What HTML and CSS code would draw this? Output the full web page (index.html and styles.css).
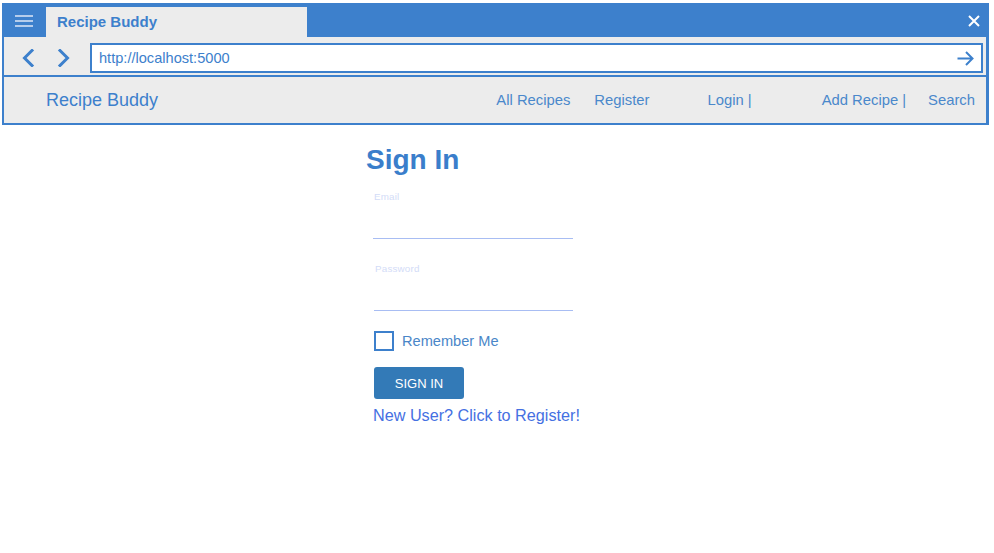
FILE: index.html
```html
<!DOCTYPE html>
<html lang="en">
<head>
<meta charset="utf-8">
<title>Recipe Buddy</title>
<link rel="stylesheet" href="styles.css">
</head>
<body>
<div class="browser">
  <div class="titlebar">
    <div class="menu-btn">
      <svg width="18" height="13" viewBox="0 0 18 13"><rect x="0" y="0" width="18" height="2"/><rect x="0" y="5" width="18" height="2"/><rect x="0" y="10" width="18" height="2"/></svg>
    </div>
    <div class="tab">Recipe Buddy</div>
    <div class="close-btn">
      <svg width="12" height="12" viewBox="0 0 12 12"><path d="M1 1 L11 11 M11 1 L1 11"/></svg>
    </div>
  </div>
  <div class="toolbar">
    <div class="nav-btn">
      <svg width="14" height="18" viewBox="0 0 14 18"><path d="M11 1.5 L3.5 9 L11 16.5"/></svg>
    </div>
    <div class="nav-btn">
      <svg width="14" height="18" viewBox="0 0 14 18"><path d="M3 1.5 L10.5 9 L3 16.5"/></svg>
    </div>
    <div class="urlbar">
      <span class="url">http://localhost:5000</span>
      <svg class="go" width="17" height="15" viewBox="0 0 17 15"><path d="M0.5 7.5 H15.5 M9 1 L15.5 7.5 L9 14"/></svg>
    </div>
  </div>
  <nav class="sitenav">
    <a class="brand">Recipe Buddy</a>
    <ul class="links">
      <li class="link">All Recipes</li>
      <li class="link link-register">Register</li>
      <li class="link link-login">Login |</li>
      <li class="link link-add">Add Recipe |</li>
      <li class="link link-search">Search</li>
    </ul>
  </nav>
</div>
<main class="content">
  <h1 class="title">Sign In</h1>
  <form class="signin">
    <div class="field">
      <label class="field-label">Email</label>
      <div class="field-input"></div>
    </div>
    <div class="field field-second">
      <label class="field-label">Password</label>
      <div class="field-input"></div>
    </div>
    <div class="remember">
      <span class="checkbox"></span>
      <span class="remember-text">Remember Me</span>
    </div>
    <button type="button" class="submit">SIGN IN</button>
    <a class="register-link">New User? Click to Register!</a>
  </form>
</main>
</body>
</html>
```
FILE: styles.css
```css
* { box-sizing: border-box; }
html, body { margin: 0; padding: 0; background: #ffffff; }
body { font-family: "Liberation Sans", Arial, sans-serif; }

.browser {
  margin: 3px 5px 0 2px;
  width: 987px;
}

.titlebar {
  height: 34px;
  background: #3d80cc;
  display: flex;
  align-items: flex-end;
}
.menu-btn {
  width: 44px;
  height: 34px;
  display: flex;
  align-items: flex-start;
  padding: 12px 0 0 13px;
}
.menu-btn svg { fill: #b5cdec; }
.tab {
  width: 261px;
  height: 30px;
  background: #ececec;
  color: #3d80cc;
  font-weight: bold;
  font-size: 15px;
  line-height: 30px;
  padding-left: 11px;
}
.close-btn {
  margin-left: auto;
  height: 34px;
  padding: 12px 9px 0 0;
}
.close-btn svg { display: block; }
.close-btn path { stroke: #ffffff; stroke-width: 2; fill: none; }

.toolbar {
  height: 40px;
  background: #ececec;
  border-left: 2px solid #3d80cc;
  border-right: 3px solid #3d80cc;
  border-bottom: 2px solid #3d80cc;
  display: flex;
  align-items: flex-start;
  padding: 6px 3px 0 14px;
}
.nav-btn {
  width: 36px;
  height: 30px;
  display: flex;
  align-items: center;
  padding-left: 3px;
}
.nav-btn svg { display: block; }
.nav-btn path { stroke: #3d80cc; stroke-width: 3; fill: none; stroke-linecap: square; }
.urlbar {
  flex: 1;
  height: 30px;
  background: #ffffff;
  border: 2px solid #3d80cc;
  display: flex;
  align-items: center;
  padding: 0 7px 0 7px;
}
.url {
  color: #3d80cc;
  font-size: 14.6px;
  flex: 1;
}
.go { display: block; }
.go path { stroke: #3d80cc; stroke-width: 2; fill: none; }

.sitenav {
  height: 48px;
  background: #ececec;
  border-left: 2px solid #3d80cc;
  border-right: 3px solid #3d80cc;
  border-bottom: 2px solid #3d80cc;
  display: flex;
  align-items: center;
  padding: 0 11px 0 42px;
}
.brand {
  color: #3d80cc;
  font-size: 18px;
}
.links {
  list-style: none;
  margin: 0 0 0 auto;
  padding: 0;
  display: flex;
}
.link {
  color: #4a88cb;
  font-size: 14.8px;
}
.link-register { margin-left: 24px; }
.link-login { margin-left: 58px; }
.link-add { margin-left: 70px; }
.link-search { margin-left: 22px; }

.content {
  width: 262px;
  margin: 0 auto;
}
.title {
  margin: 19px 0 0 0;
  font-size: 28px;
  line-height: 32px;
  font-weight: bold;
  color: #3a7ecb;
}
.signin {
  margin: 15px 0 0 7px;
  width: 200px;
  display: flex;
  flex-direction: column;
}
.field-label {
  display: block;
  font-size: 9.8px;
  line-height: 12px;
  color: #d3dcf7;
  padding-left: 1px;
  letter-spacing: 0.2px;
}
.field-input {
  height: 36px;
  border-bottom: 1px solid #a8bdf3;
}
.field-second { margin-top: 24px; }
.field-second .field-label { padding-left: 2px; }
.field-second .field-input { margin-left: 1px; }

.remember {
  margin-top: 20px;
  display: flex;
  align-items: center;
  padding-left: 1px;
}
.checkbox {
  width: 20px;
  height: 20px;
  border: 2px solid #3d80cc;
  background: #ffffff;
}
.remember-text {
  margin-left: 8px;
  font-size: 14.6px;
  color: #4a86c8;
}
.submit {
  margin: 16px 0 0 1px;
  width: 90px;
  height: 32px;
  border: none;
  border-radius: 3px;
  background: #337ab7;
  color: #ffffff;
  font-family: "Liberation Sans", Arial, sans-serif;
  font-size: 13px;
  padding: 0;
}
.register-link {
  margin-top: 7px;
  font-size: 16.2px;
  line-height: 18px;
  color: #4570e2;
  white-space: nowrap;
}
```
